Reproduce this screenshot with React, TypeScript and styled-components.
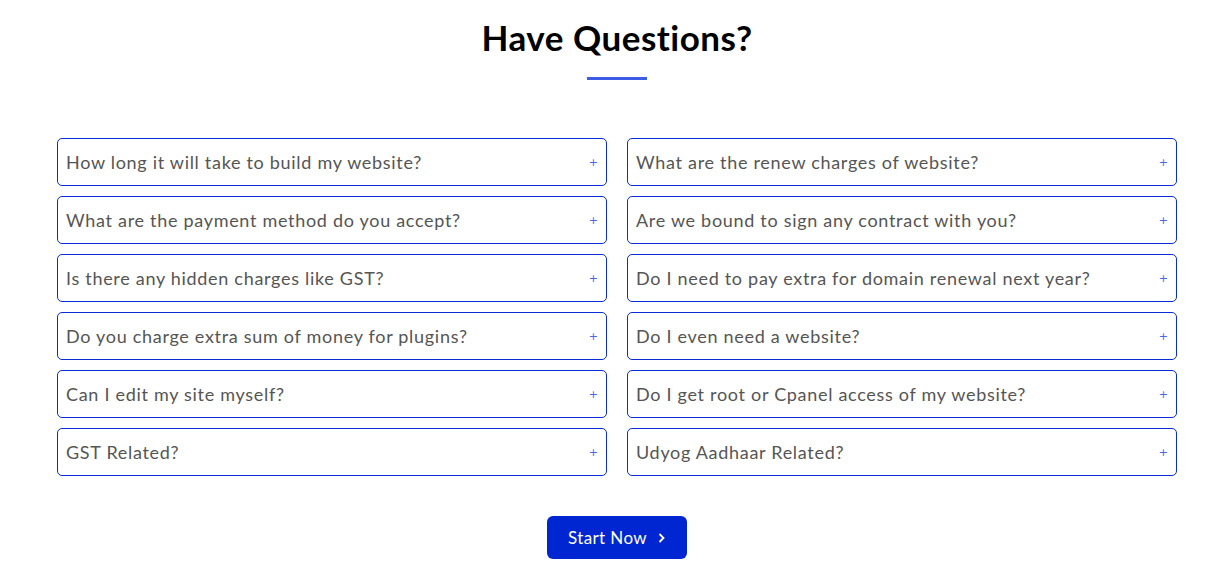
import React from 'react';
import styled, { createGlobalStyle } from 'styled-components';

const GlobalStyle = createGlobalStyle`
  body {
    margin: 0;
    background: #ffffff;
    font-family: Lato, "Open Sans", sans-serif;
  }
`;

const Section = styled.section`
  width: 1120px;
  margin-left: 57px;
  padding-top: 16px;
  display: flex;
  flex-direction: column;
  align-items: center;
`;

const Title = styled.h2`
  margin: 0;
  font-family: Lato, sans-serif;
  font-size: 35px;
  font-weight: 700;
  color: #000;
  line-height: 42px;
  letter-spacing: 0.5px;
`;

const Underline = styled.div`
  width: 60px;
  height: 3px;
  background: #3d5ce6;
  margin-top: 19px;
`;

const Grid = styled.div`
  width: 100%;
  margin-top: 58px;
  display: grid;
  grid-template-columns: 1fr 1fr;
  column-gap: 20px;
  row-gap: 10px;
`;

const Item = styled.button`
  height: 48px;
  box-sizing: border-box;
  border: 1px solid #0a2bd8;
  border-radius: 5px;
  background: #fff;
  padding: 0 8px 0 8px;
  display: flex;
  align-items: center;
  justify-content: space-between;
  cursor: pointer;
  text-align: left;
`;

const Question = styled.span`
  font-family: Lato, sans-serif;
  font-size: 18px;
  color: #555;
  letter-spacing: 0.7px;
  margin-top: -1px;
`;

const Plus = styled.span`
  font-family: "DejaVu Sans", sans-serif;
  font-size: 11px;
  color: #4a66e3;
`;

const StartButton = styled.button`
  margin-top: 40px;
  width: 140px;
  height: 43px;
  border: none;
  border-radius: 6px;
  background: #0026d1;
  color: #fff;
  font-family: Lato, sans-serif;
  font-size: 17px;
  letter-spacing: 0.4px;
  display: flex;
  align-items: center;
  justify-content: center;
  gap: 10px;
  cursor: pointer;
`;

const questions = [
  'How long it will take to build my website?',
  'What are the renew charges of website?',
  'What are the payment method do you accept?',
  'Are we bound to sign any contract with you?',
  'Is there any hidden charges like GST?',
  'Do I need to pay extra for domain renewal next year?',
  'Do you charge extra sum of money for plugins?',
  'Do I even need a website?',
  'Can I edit my site myself?',
  'Do I get root or Cpanel access of my website?',
  'GST Related?',
  'Udyog Aadhaar Related?',
];

const App: React.FC = () => (
  <>
    <GlobalStyle />
    <Section>
      <Title>Have Questions?</Title>
      <Underline />
      <Grid>
        {questions.map((q) => (
          <Item key={q}>
            <Question>{q}</Question>
            <Plus>+</Plus>
          </Item>
        ))}
      </Grid>
      <StartButton>
        Start Now
        <svg width="9" height="12" viewBox="0 0 9 12">
          <path d="M2.5 2 L6.5 6 L2.5 10" stroke="#fff" strokeWidth="1.8" fill="none" />
        </svg>
      </StartButton>
    </Section>
  </>
);

export default App;
